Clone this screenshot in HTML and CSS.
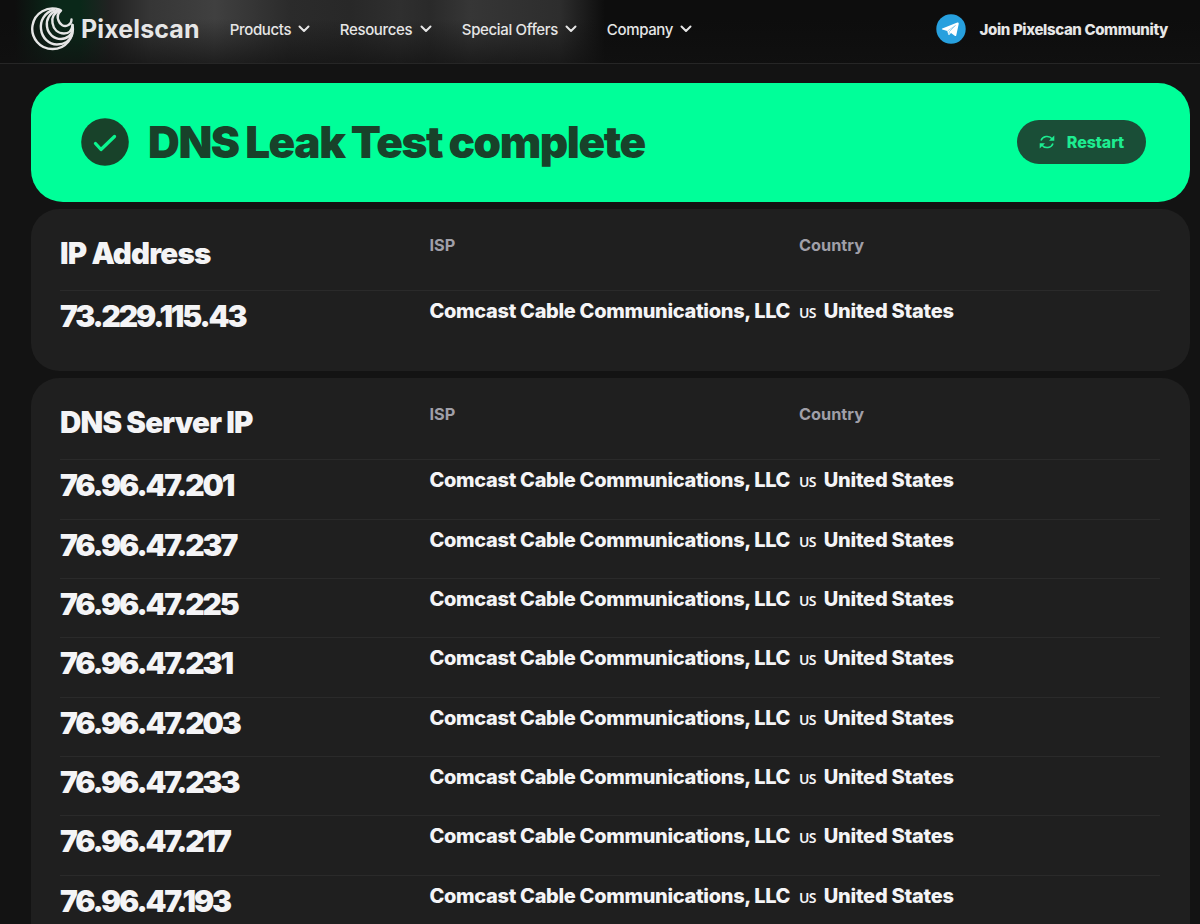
FILE: index.html
```
<!DOCTYPE html>
<html lang="en">
<head>
    <meta charset="utf-8">
    <title>DNS Leak Test - Pixelscan</title>
    <link rel="stylesheet" href="styles.css">
</head>
<body>
    <header class="header">
        <a class="logo">
            <svg class="logo-icon" viewBox="0 0 44 44" fill="none" stroke="currentColor" stroke-width="2.4" stroke-linecap="round">
                <path d="M28.500 2.700A20.300 20.300 0 1 0 41.500 18"/>
                <path d="M23 2.500C13 6 9 14 10 22C11 31 18 37.500 26 37.500C33 37.500 39 34 41 27"/>
                <path d="M27 3C18 6 15 13 16 19.500C17 27 23 32 30 32C36 32 41 28 41.500 22"/>
                <path d="M29 3C23 6 20.500 11 21.500 16C22.500 22.500 27 26.500 33 26.500C38 26.500 41 23 41.500 18"/>
                <path d="M30 3.500C27 6 26 10 27.500 13.500C29 18 33 20 36.500 18.500C39 17.500 40.500 15.500 40.500 12.500"/>
            </svg>
            <span class="logo-text">Pixelscan</span>
        </a>
        <nav class="nav">
            <a class="nav-item nav-products">Products <svg class="chevron" viewBox="0 0 12 8"><path d="M1.500 1.500L6 6L10.500 1.500"/></svg></a>
            <a class="nav-item nav-resources">Resources <svg class="chevron" viewBox="0 0 12 8"><path d="M1.500 1.500L6 6L10.500 1.500"/></svg></a>
            <a class="nav-item nav-offers">Special Offers <svg class="chevron" viewBox="0 0 12 8"><path d="M1.500 1.500L6 6L10.500 1.500"/></svg></a>
            <a class="nav-item nav-company">Company <svg class="chevron" viewBox="0 0 12 8"><path d="M1.500 1.500L6 6L10.500 1.500"/></svg></a>
        </nav>
        <a class="community">
            <svg class="telegram" viewBox="0 0 30 30">
                <circle cx="15" cy="15" r="14.700" fill="#27a0de"/>
                <path fill="#fff" d="M6.300 14.500L21.300 8.600C22.200 8.300 22.900 8.900 22.700 9.900L20.300 21.200C20.100 22.100 19.400 22.300 18.700 21.800L15 19.100L13.200 20.900C12.800 21.300 12.300 21.100 12.200 20.600L11.300 17L6.300 15.500C5.700 15.300 5.700 14.800 6.300 14.500Z"/>
                <path fill="none" stroke="#8ccbec" stroke-width=".8" d="M11.500 17L19.500 11.500L13.500 17.500L12.700 20.600"/>
            </svg>
            <span>Join Pixelscan Community</span>
        </a>
    </header>

    <main class="content">
        <section class="banner">
            <svg class="check" viewBox="0 0 48 48">
                <circle cx="24" cy="24" r="23.800" fill="#18422a"/>
                <path d="M14.500 25.500L20 31.500L33.500 18.500" fill="none" stroke="#0bf58f" stroke-width="3.300" stroke-linecap="round" stroke-linejoin="round"/>
            </svg>
            <h1 class="banner-title">DNS Leak Test complete</h1>
            <button class="restart">
                <svg class="restart-icon" viewBox="0 0 16 16" fill="none" stroke="currentColor" stroke-width="1.500">
                    <path d="M2 6.500C3.500 2 10 .8 13.300 5"/>
                    <path d="M14 9.500C12.500 14 6 15.200 2.700 11"/>
                    <path fill="currentColor" stroke="none" d="M15.300 1.500V6.800H10ZM.7 14.500V9.200H6Z"/>
                </svg>
                <span>Restart</span>
            </button>
        </section>

        <section class="card">
            <div class="row head">
                <h2>IP Address</h2><span>ISP</span><span>Country</span>
            </div>
            <div class="row">
                <b class="ip">73.229.115.43</b><span class="isp">Comcast Cable Communications, LLC</span><span class="country"><i>US</i>United States</span>
            </div>
        </section>

        <section class="card">
            <div class="row head">
                <h2>DNS Server IP</h2><span>ISP</span><span>Country</span>
            </div>
            <div class="row">
                <b class="ip">76.96.47.201</b><span class="isp">Comcast Cable Communications, LLC</span><span class="country"><i>US</i>United States</span>
            </div>
            <div class="row">
                <b class="ip">76.96.47.237</b><span class="isp">Comcast Cable Communications, LLC</span><span class="country"><i>US</i>United States</span>
            </div>
            <div class="row">
                <b class="ip">76.96.47.225</b><span class="isp">Comcast Cable Communications, LLC</span><span class="country"><i>US</i>United States</span>
            </div>
            <div class="row">
                <b class="ip">76.96.47.231</b><span class="isp">Comcast Cable Communications, LLC</span><span class="country"><i>US</i>United States</span>
            </div>
            <div class="row">
                <b class="ip">76.96.47.203</b><span class="isp">Comcast Cable Communications, LLC</span><span class="country"><i>US</i>United States</span>
            </div>
            <div class="row">
                <b class="ip">76.96.47.233</b><span class="isp">Comcast Cable Communications, LLC</span><span class="country"><i>US</i>United States</span>
            </div>
            <div class="row">
                <b class="ip">76.96.47.217</b><span class="isp">Comcast Cable Communications, LLC</span><span class="country"><i>US</i>United States</span>
            </div>
            <div class="row">
                <b class="ip">76.96.47.193</b><span class="isp">Comcast Cable Communications, LLC</span><span class="country"><i>US</i>United States</span>
            </div>
        </section>
    </main>
</body>
</html>
```
FILE: styles.css
```
* {
    box-sizing: border-box;
}

html, body {
    height: 100%;
    margin: 0;
    overflow: hidden;
}

body {
    background: #131313;
    color: #f4f4f6;
    font-family: Inter, "Liberation Sans", sans-serif;
}

.header {
    height: 64px;
    padding: 0 32px 5px 30.5px;
    display: flex;
    align-items: center;
    border-bottom: 1px solid #262626;
    color: #e6e6e6;
    background:
        linear-gradient(rgba(17, 17, 17, 0) 30%, rgba(17, 17, 17, 0.7)),
        linear-gradient(90deg, #0e0e0e 15px, #0a2819 55px, #0a2819 80px, #222 110px, #363636 150px, #404040 215px, #2b2b2b 290px, #282828 350px, #2f2f2f 400px, #2a2a2a 430px, #363636 470px, #2d2d2d 560px, #0d0d0d 605px);
}

.logo {
    display: flex;
    align-items: center;
    width: 199.300px;
    gap: 6.500px;
}

.logo-icon {
    width: 44px;
    height: 44px;
}

.logo-text {
    font-size: 25px;
    font-weight: 700;
    letter-spacing: 0.1px;
}

.nav {
    display: flex;
    gap: 30px;
    flex: 1;
}

.nav-item {
    display: flex;
    align-items: center;
    justify-content: space-between;
    font-size: 15px;
    font-weight: 500;
    letter-spacing: -0.35px;
    white-space: nowrap;
}

.nav-products {
    width: 80px;
}

.nav-resources {
    width: 92px;
}

.nav-offers {
    width: 115px;
}

.nav-company {
    width: 85px;
}

.chevron {
    width: 12px;
    height: 8px;
    fill: none;
    stroke: currentColor;
    stroke-width: 2;
    stroke-linecap: round;
    stroke-linejoin: round;
}

.community {
    display: flex;
    align-items: center;
    gap: 14px;
    font-size: 15px;
    font-weight: 800;
    letter-spacing: -0.37px;
    white-space: nowrap;
}

.telegram {
    width: 30px;
    height: 30px;
}

.content {
    padding: 19px 10px 0 31px;
    display: flex;
    flex-direction: column;
    gap: 7.4px;
}

.banner {
    height: 118.6px;
    padding: 0 44px 1px 50px;
    border-radius: 32px;
    background: #00ff99;
    display: flex;
    align-items: center;
}

.check {
    width: 48px;
    height: 48px;
    margin-right: 19px;
}

.banner-title {
    flex: 1;
    margin: 0;
    font-size: 44px;
    font-weight: 900;
    letter-spacing: -1.4px;
    word-spacing: -1px;
    line-height: 1;
    color: #18422a;
}

.restart {
    width: 129px;
    height: 44px;
    padding: 0;
    border: 0;
    border-radius: 22px;
    background: #1a4e37;
    color: #1ded91;
    font: 800 16px Inter, sans-serif;
    letter-spacing: -0.1px;
    display: flex;
    align-items: center;
    justify-content: center;
    gap: 12px;
}

.restart-icon {
    width: 16px;
    height: 16px;
}

.card {
    padding: 0 30px 21.5px 29px;
    border-radius: 28px;
    background: #1f1f1f;
}

.row {
    height: 59.35px;
    border-top: 1px solid #2a2a2a;
    display: grid;
    grid-template-columns: 369.500px 369.500px 1fr;
    align-items: start;
    font-size: 20px;
    font-weight: 700;
    line-height: 24px;
    white-space: nowrap;
}

.row > span {
    padding-top: 8px;
}

.row.head {
    height: 81px;
    border-top: 0;
    color: #a09fa8;
    font-size: 16.3px;
}

.head > span {
    padding-top: 24px;
}

.row h2 {
    margin: 0;
    padding-top: 26px;
    color: #f4f4f6;
    font-size: 29.500px;
    font-weight: 900;
    letter-spacing: -0.8px;
    line-height: 36px;
}

.ip {
    padding-top: 7px;
    font-size: 30px;
    font-weight: 900;
    letter-spacing: -2.15px;
    line-height: 36px;
}

.row .isp {
    font-weight: 800;
    letter-spacing: -0.32px;
}

.row .country {
    font-weight: 800;
    letter-spacing: -0.25px;
}

.country i {
    margin-right: 8px;
    font: 600 14px "Noto Sans", sans-serif;
    letter-spacing: -0.7px;
}
```
